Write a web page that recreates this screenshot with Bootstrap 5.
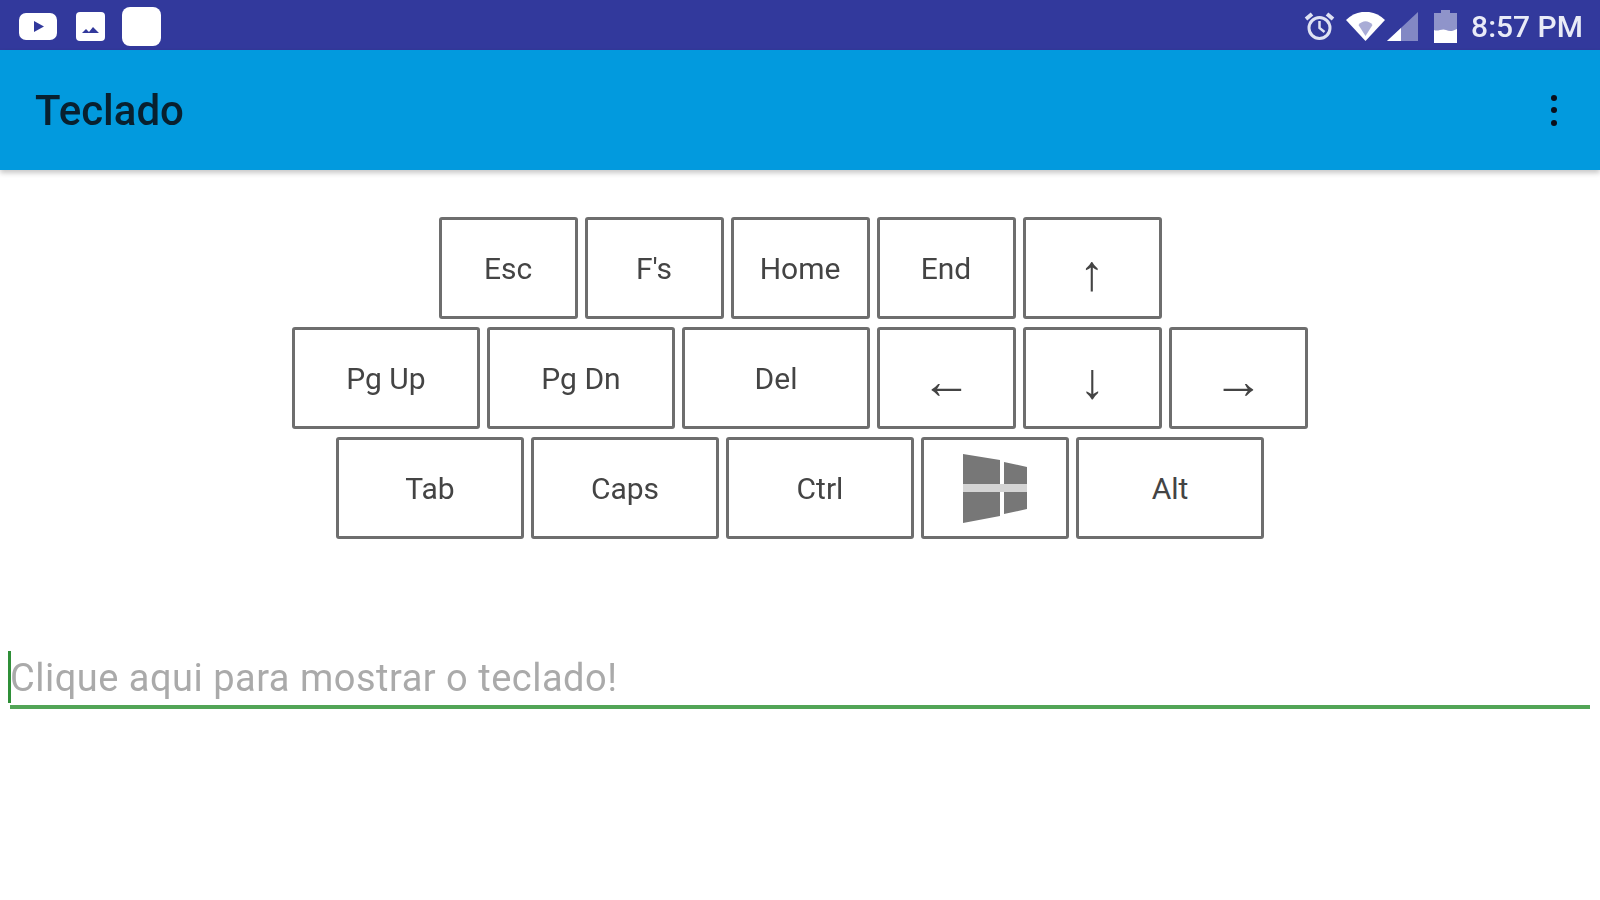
<!DOCTYPE html>
<html>
<head>
  <title>Teclado</title>
  <link rel="stylesheet" href="https://cdn.jsdelivr.net/npm/bootstrap@5.3.0/dist/css/bootstrap.min.css">
  <style>
    body { font-family: Roboto, "Liberation Sans", sans-serif; background: #fff; overflow: hidden; filter: blur(.7px); }
    .status-bar { height: 50px; background: #32399c; padding: 2px 17px 0 19px; }
    .status-time { font-size: 30px; font-weight: 500; color: #e9ebf7; line-height: 1; margin-left: 14px; padding-top: 1px; }
    .gap-image { margin-left: 19px; }
    .gap-square { margin-left: 17px; }
    .gap-wifi { margin-left: 11px; }
    .gap-signal { margin-left: 2px; }
    .gap-battery { margin-left: 16px; }
    .app-bar { height: 120px; background: #029ade; padding: 0 43px 0 35px; box-shadow: 0 3px 5px rgba(0,0,0,.22); }
    .app-title { font-size: 42px; font-weight: 500; color: #08202f; line-height: 1; margin: 2px 0 0; }
    .more-dots { gap: 6.5px; }
    .more-dot { width: 6px; height: 6px; border-radius: 50%; background: #0a0f1c; }
    .keys { padding-top: 47px; gap: 8px; }
    .key-row { gap: 7px; }
    .key { height: 102px; width: 188px; padding: 1px 0 0; border: 3px solid #6e6e6e; border-radius: 3px; background: #fff; color: #444; font-size: 30px; line-height: 1; }
    .key:hover { border-color: #6e6e6e; background: #fff; color: #444; }
    .key-sm { width: 139px; }
    .key-md { width: 148px; padding: 0; }
    .arrow { font-family: "Liberation Sans", sans-serif; font-size: 50px; color: #444; }
    .arrow-up { padding-top: 9px; }
    .arrow-down { padding-top: 6px; }
    .arrow-side { padding-top: 6px; }
    .field { margin: 112px 10px 0; }
    .field-input { height: 58px; padding: 0; border: 0; border-bottom: 4px solid #52a557; border-radius: 0; font-size: 38px; letter-spacing: .5px; color: #333; box-shadow: none; background: transparent; }
    .field-input::placeholder { color: #aaa; opacity: 1; }
    .field-caret { position: absolute; left: -2px; top: 0; width: 3px; height: 52px; background: #2f8f38; }
  </style>
</head>
<body>
  <div class="status-bar d-flex align-items-center justify-content-between">
    <div class="d-flex align-items-center">
      <svg width="38" height="27" viewBox="0 0 38 27"><rect width="38" height="27" rx="7" fill="#fff"/><path d="M15 8l10 5.5-10 5.5z" fill="#32399c"/></svg>
      <svg class="gap-image" width="29" height="29" viewBox="0 0 29 29"><rect width="29" height="29" rx="4" fill="#fff"/><path d="M6 21l4-4 3 3 4-5 6 6z" fill="#32399c"/></svg>
      <svg class="gap-square" width="39" height="39" viewBox="0 0 39 39"><rect width="39" height="39" rx="8" fill="#fff"/></svg>
    </div>
    <div class="d-flex align-items-center">
      <svg width="31" height="31" viewBox="0 0 31 31" fill="none" stroke="#dfe2f3"><circle cx="15.5" cy="17" r="10.5" stroke-width="3"/><path d="M15.5 10v7l5 4" stroke-width="2.5"/><path d="M2 8l6-5M29 8l-6-5" stroke-width="4"/></svg>
      <svg class="gap-wifi" width="39" height="29" viewBox="0 0 39 29"><path d="M19.5 29L0 8C11-3 28-3 39 8z" fill="#fff"/><path d="M19.5 24l-7-11c4-5 10-5 14 0z" fill="#a9acd6"/></svg>
      <svg class="gap-signal" width="31" height="29" viewBox="0 0 31 29"><path d="M0 29L31 0v29z" fill="#8288c4"/><path d="M0 29l14-13v13z" fill="#fff"/></svg>
      <svg class="gap-battery" width="23" height="33" viewBox="0 0 23 33"><path d="M7 0h9v3h7v30H0V3h7z" fill="#8f94ca"/><path d="M0 20c4 2 8-2 12 0s7 1 11-1v14H0z" fill="#fff"/></svg>
      <span class="status-time">8:57 PM</span>
    </div>
  </div>

  <div class="app-bar d-flex align-items-center justify-content-between">
    <h1 class="app-title">Teclado</h1>
    <div class="more-dots d-flex flex-column">
      <span class="more-dot"></span>
      <span class="more-dot"></span>
      <span class="more-dot"></span>
    </div>
  </div>

  <div class="keys d-flex flex-column">
    <div class="key-row d-flex justify-content-center">
      <button class="btn key key-sm">Esc</button>
      <button class="btn key key-sm">F's</button>
      <button class="btn key key-sm">Home</button>
      <button class="btn key key-sm">End</button>
      <button class="btn key key-sm arrow arrow-up">↑</button>
    </div>
    <div class="key-row d-flex justify-content-center">
      <button class="btn key">Pg Up</button>
      <button class="btn key">Pg Dn</button>
      <button class="btn key">Del</button>
      <button class="btn key key-sm arrow arrow-side">←</button>
      <button class="btn key key-sm arrow arrow-down">↓</button>
      <button class="btn key key-sm arrow arrow-side">→</button>
    </div>
    <div class="key-row d-flex justify-content-center">
      <button class="btn key">Tab</button>
      <button class="btn key">Caps</button>
      <button class="btn key">Ctrl</button>
      <button class="btn key key-md" aria-label="Windows">
        <svg width="64" height="69" viewBox="0 0 64 69"><path d="M0 30h64v8H0z" fill="#d4d4d4"/><path d="M0 0l37 6v24H0zM41 8l23 5v17H41zM0 38h37v24L0 69zM41 38h23v17l-23 5z" fill="#777"/></svg>
      </button>
      <button class="btn key">Alt</button>
    </div>
  </div>

  <div class="field position-relative">
    <input type="text" class="form-control field-input" placeholder="Clique aqui para mostrar o teclado!">
    <span class="field-caret"></span>
  </div>

  <script src="https://cdn.jsdelivr.net/npm/bootstrap@5.3.0/dist/js/bootstrap.bundle.min.js"></script>
</body>
</html>
